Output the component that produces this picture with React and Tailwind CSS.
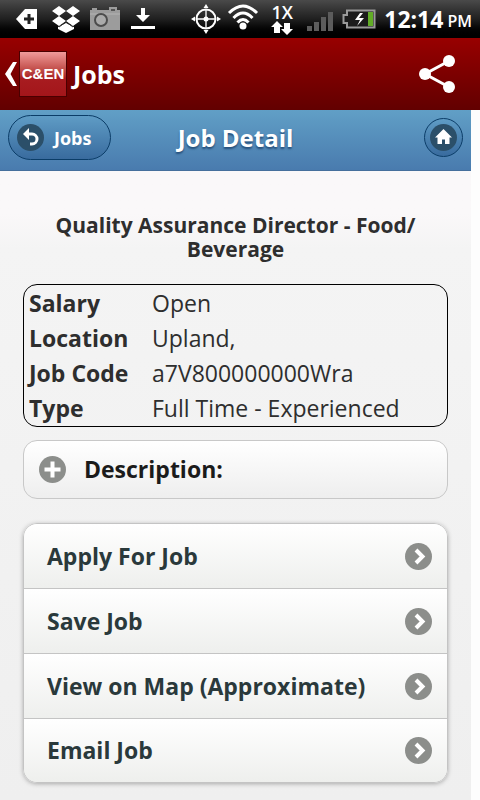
import React, { useState } from 'react';

const details = [
  { label: 'Salary', value: 'Open' },
  { label: 'Location', value: 'Upland,' },
  { label: 'Job Code', value: 'a7V800000000Wra' },
  { label: 'Type', value: 'Full Time - Experienced' },
];

const actions = [
  { id: 'apply', label: 'Apply For Job' },
  { id: 'save', label: 'Save Job' },
  { id: 'map', label: 'View on Map (Approximate)' },
  { id: 'email', label: 'Email Job' },
];

const StatusBar = () => (
  <div className="flex h-[38px] items-center bg-linear-to-b from-[#4a4a4a] via-[#202020] to-black pl-4 pr-2 text-white">
    {/* Notifications */}
    <div className="flex items-center">
      <svg width="22" height="22" viewBox="0 0 22 22">
        <path d="M0 11 9 1h12v20H9z" fill="#fff" />
        <path d="M13 6v10M8 11h10" stroke="#222" strokeWidth="3" />
      </svg>
      <svg className="ml-3.5" width="28" height="27" viewBox="0 0 28 27" fill="#fff">
        <path d="m7 0 7 5-7 5-7-5zM21 0l7 5-7 5-7-5zM7 10l7 5-7 5-7-5zM21 10l7 5-7 5-7-5zM14 17l8 4v2l-8 4-8-4v-2z" />
        <path d="m6 20 1 1 7-5 7 5 1-1" fill="none" stroke="#2a2a2a" />
      </svg>
      <svg className="ml-2.5" width="30" height="24" viewBox="0 0 30 24">
        <path d="M0 3h2V1h5v2h12V0h8v3h3v20H0z" fill="#9c9c9c" />
        <path d="M0 7h30" stroke="#b4b4b4" />
        <circle cx="11" cy="13" r="6" fill="#aaa" stroke="#4c4c4c" strokeWidth="2" />
        <path d="M21 3h4" stroke="#555" strokeWidth="2" />
      </svg>
      <svg className="ml-2.5" width="26" height="22" viewBox="0 0 26 22" fill="#fff">
        <path d="M11 0h4v7h5l-7 7-7-7h5zM1 18h24v3H1z" />
      </svg>
    </div>

    {/* Signals and clock */}
    <div className="ml-auto flex items-center">
      <svg width="30" height="30" viewBox="0 0 30 30" fill="none" stroke="#fff">
        <circle cx="15" cy="15" r="9.5" strokeWidth="2" />
        <path d="M15 6v18M6 15h18" strokeWidth="1.3" />
        <circle cx="15" cy="15" r="2.5" fill="#fff" stroke="none" />
        <path d="m15 0 2.5 4h-5zM15 30l2.5-4h-5zM0 15l4-2.500v5zM30 15l-4-2.500v5z" fill="#fff" stroke="none" />
      </svg>
      <svg className="ml-1.5 mb-1" width="32" height="26" viewBox="0 0 32 26" fill="none" stroke="#fff" strokeWidth="3">
        <path d="M2 9Q16-5 30 9M6.500 14Q16 4 25.500 14M10.500 18.500Q16 12.500 21.500 18.500" />
        <circle cx="16" cy="22" r="3.5" fill="#fff" stroke="none" />
      </svg>
      <div className="ml-3 flex w-[22px] flex-col items-center">
        <span className="text-[18px] leading-[18px] font-semibold">1X</span>
        <svg width="22" height="14" viewBox="0 0 22 14" fill="#fff">
          <path d="m6 0 6 6H9v6H3V6H0zM16 14l-6-6h3V2h6v6h3z" />
        </svg>
      </div>
      <svg className="ml-3.5 mt-1" width="27" height="20" viewBox="0 0 27 20" fill="#5c5c5c">
        <path d="M0 15h5v5H0zM7 11h5v9H7zM14 6h5v14h-5zM21 1h5v19h-5z" />
      </svg>
      <svg className="ml-2" width="34" height="20" viewBox="0 0 34 20">
        <path d="M5 1.500h27.500v17H5V14H1.500V6H5z" fill="#1c1c1c" stroke="#9a9a9a" strokeWidth="2" />
        <path d="M26 3h5v14h-5z" fill="#62ad27" />
        <path d="m18 4-5 7h5l-3 6 7-8h-5l4-5z" fill="#fff" />
      </svg>
      <span className="ml-2 text-[23px] leading-8 font-bold">12:14</span>
      <span className="ml-1 pt-1 text-[16px] leading-6 font-semibold">PM</span>
    </div>
  </div>
);

const AppBar = () => (
  <div className="flex h-[72px] items-center justify-between bg-linear-to-b from-[#980000] to-[#620000] pl-1 pr-6">
    <button type="button" className="flex items-center text-white">
      <svg width="14" height="26" viewBox="0 0 14 26" fill="#fff">
        <path d="M9 1h4L6.500 13 13 25H9L1 13z" />
      </svg>
      <span className="ml-px flex h-[46px] w-12 items-center justify-center border border-[#4a0000] bg-linear-to-b from-[#f09a9a] from-0% via-[#a81c20] via-60% to-[#a3161a] to-100% font-['Liberation_Sans',sans-serif] text-[15px] font-bold">
        C&amp;EN
      </span>
      <span className="ml-1.5 text-[25px] leading-8 font-bold">Jobs</span>
    </button>
    <button type="button" aria-label="Share">
      <svg width="38" height="40" viewBox="0 0 38 40" fill="#fff">
        <path d="M31 7 7 20l24 13" fill="none" stroke="#fff" strokeWidth="3" />
        <circle cx="31" cy="7" r="6" />
        <circle cx="7" cy="20" r="6" />
        <circle cx="31" cy="33" r="6" />
      </svg>
    </button>
  </div>
);

const PageHeader = () => (
  <header className="grid h-[61px] grid-cols-[1fr_auto_1fr] items-center border-b border-[#456f9c] bg-linear-to-b from-[#619fc6] to-[#497bae] px-2 pb-[5px] text-white text-shadow-[0_2px_2px_#254f7b]">
    <button
      type="button"
      className="flex h-[45px] w-[103px] items-center justify-self-start rounded-full border border-[#0b3d68] bg-linear-to-b from-[#5f9cc5] to-[#396b9e] pl-2"
    >
      <svg width="27" height="27" viewBox="0 0 27 27">
        <circle cx="13.5" cy="13.5" r="13.5" fill="#2b4f69" />
        <path d="M10 10h5a5 5 0 0 1 0 10h-2" fill="none" stroke="#fff" strokeWidth="3" />
        <path d="m6 10 6-6v12z" fill="#fff" />
      </svg>
      <span className="ml-2.5 text-[18px] leading-7 font-bold">Jobs</span>
    </button>
    <h1 className="text-[24px] leading-8 font-bold">Job Detail</h1>
    <button
      type="button"
      aria-label="Home"
      className="flex size-[39px] items-center justify-center justify-self-end rounded-full border border-[#0b3d68] bg-linear-to-b from-[#5f9cc5] to-[#396b9e]"
    >
      <svg width="27" height="27" viewBox="0 0 27 27">
        <circle cx="13.5" cy="13.5" r="13.5" fill="#2b4f69" />
        <path d="m13.500 5 8.500 8.500h-2.500V20H15v-4.500h-3V20H7.500v-6.500H5z" fill="#fff" />
      </svg>
    </button>
  </header>
);

const App = () => {
  const [expanded, setExpanded] = useState(false);

  return (
    <div className="min-h-screen bg-[#fdfdfd] font-['Open_Sans','Noto_Sans',sans-serif]">
      <StatusBar />
      <AppBar />
      <div className="mr-[9px] bg-linear-to-b from-[#faf8f9] from-15% via-[#f4f4f4] via-20% to-[#efefef] pb-[18px]">
        <PageHeader />
        <main className="px-[23px] pt-[42px] text-[#2e2e2e]">
          <h2 className="px-6 text-center text-[21px] leading-6 font-bold">
            Quality Assurance Director - Food/<wbr />Beverage
          </h2>

          <div className="mt-[23px] rounded-[14px] border border-black px-[5px] pt-px">
            <table className="w-full text-left text-[23px] leading-[35px]">
              <tbody>
                {details.map((item) => (
                  <tr key={item.label}>
                    <th scope="row" className="w-[123px] font-bold">{item.label}</th>
                    <td>{item.value}</td>
                  </tr>
                ))}
              </tbody>
            </table>
          </div>

          <button
            type="button"
            aria-expanded={expanded}
            onClick={() => setExpanded(!expanded)}
            className="mt-[13px] flex h-[59px] w-full items-center rounded-[14px] border border-[#c8c8c8] bg-linear-to-b from-white to-[#eeeeee] pl-[15px] text-[23px] font-bold text-[#1b1b1b]"
          >
            <svg width="27" height="27" viewBox="0 0 27 27">
              <circle cx="13.5" cy="13.5" r="13.5" fill="#8c8e8b" />
              <path d="M13.500 5.500v16M5.500 13.500h16" stroke="#fff" strokeWidth="4" />
            </svg>
            <span className="ml-[18px]">Description:</span>
          </button>

          <ul className="mt-6 overflow-hidden rounded-[14px] border border-[#c4c4c4] shadow-[0_1px_4px_#aaaaaa]">
            {actions.map((action) => (
              <li key={action.id} className="h-[65px] border-b border-[#c4c4c4] last:h-[63px] last:border-b-0">
                <a
                  href={`#${action.id}`}
                  className="flex h-full items-center justify-between bg-linear-to-b from-white to-[#eeefed] pl-[23px] pr-[15px] text-[23px] font-bold text-[#2a393b]"
                >
                  {action.label}
                  <svg width="27" height="27" viewBox="0 0 27 27">
                    <circle cx="13.5" cy="13.5" r="13.5" fill="#8c8e8b" />
                    <path d="m11 7 6.500 6.500L11 20" fill="none" stroke="#fff" strokeWidth="4" />
                  </svg>
                </a>
              </li>
            ))}
          </ul>
        </main>
      </div>
    </div>
  );
};

export default App;
